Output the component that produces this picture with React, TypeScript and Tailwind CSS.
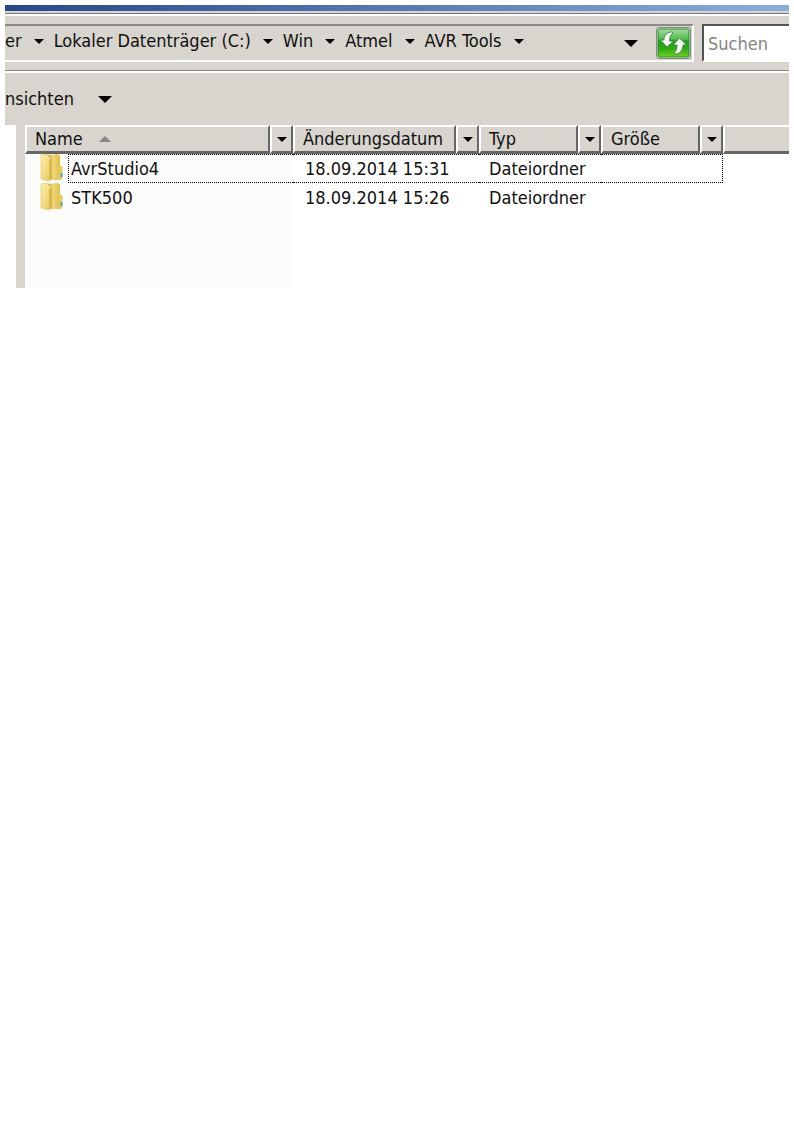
import type { ReactNode } from "react";

const crumbs = ["er", "Lokaler Datenträger (C:)", "Win", "Atmel", "AVR Tools"];

const files = [
  { name: "AvrStudio4", modified: "18.09.2014 15:31", kind: "Dateiordner", focused: true },
  { name: "STK500", modified: "18.09.2014 15:26", kind: "Dateiordner", focused: false },
];

export default function App() {
  return (
    <div className="p-[5px] bg-white text-lg leading-6 text-[#101010] font-['DejaVu_Sans_Condensed','DejaVu_Sans',sans-serif]">
      <main className="bg-[#d7d5ce] overflow-hidden">
        <div className="h-1.5 bg-gradient-to-r from-[#28468c] to-[#8aaee2]" />
        <div className="h-[5px] pt-0.5 border-b-2 border-b-white">
          <div className="h-px bg-[#777]" />
        </div>

        <AddressBar />

        <div className="h-[3px] mt-2 border-t border-[#858585] border-b-2 border-b-white" />
        <div className="h-[52px] flex items-center">
          <button type="button" className="flex items-center gap-6 whitespace-nowrap">
            nsichten
            <Arrow className="w-3.5 h-[7px]" />
          </button>
        </div>

        <div className="flex h-[163px]">
          <nav className="w-[11px] shrink-0 bg-white" />
          <div className="w-[9px] shrink-0" />
          <FileList />
        </div>
      </main>
    </div>
  );
}

function AddressBar() {
  return (
    <div className="flex gap-2 mt-2">
      <div className="flex-1 h-[38px] flex items-center border-t-2 border-t-[#8a8a8a] border-b-2 border-b-white border-r-2 border-r-white">
        <ol className="flex items-center flex-1 pb-1 whitespace-nowrap">
          {crumbs.map((c) => (
            <li key={c} className="flex items-center">
              <a href="#" className="mr-3">{c}</a>
              <button type="button" aria-label={`${c} öffnen`} className="mr-2.5">
                <Arrow className="w-2.5 h-[5px]" />
              </button>
            </li>
          ))}
        </ol>
        <button type="button" aria-label="Verlauf" className="mr-[18px]">
          <Arrow className="w-3.5 h-[7px]" />
        </button>
        <button type="button" aria-label="Aktualisieren" className="mr-px">
          <RefreshIcon />
        </button>
      </div>
      <input
        type="search"
        aria-label="Suchen"
        placeholder="Suchen"
        className="w-[87px] h-[38px] pl-1 bg-white border-t-2 border-l-2 border-[#555] border-b-2 border-b-white outline-none placeholder:text-[#858585]"
      />
    </div>
  );
}

function FileList() {
  return (
    <div className="flex-1 bg-[linear-gradient(to_right,#fcfcfc_268px,#fff_268px)]">
      <table className="w-full table-fixed border-collapse">
        <colgroup>
          <col className="w-[268px]" />
          <col className="w-[186px]" />
          <col className="w-[122px]" />
          <col className="w-[122px]" />
          <col />
        </colgroup>
        <thead>
          <tr>
            <HeaderCell label="Name">
              <svg className="w-3 h-1.5 ml-4" viewBox="0 0 12 6">
                <path d="M6 0l6 6H0z" fill="#868686" />
              </svg>
            </HeaderCell>
            <HeaderCell label="Änderungsdatum" />
            <HeaderCell label="Typ" />
            <HeaderCell label="Größe" />
            <td className="p-0">
              <div className="h-[29px] bg-[#d7d5ce] border-t-2 border-l-2 border-white border-b-3 border-b-[#666]" />
            </td>
          </tr>
        </thead>
        <tbody>
          {files.map((f) => {
            const line = f.focused ? "border-black" : "border-transparent";
            return (
              <tr key={f.name} className="whitespace-nowrap">
                <td className="p-0">
                  <div className="flex pl-[15px]">
                    <FolderIcon />
                    <div className={`flex-1 ml-1 pl-0.5 h-[29px] flex items-center border-y border-l border-dotted ${line}`}>
                      {f.name}
                    </div>
                  </div>
                </td>
                <td className="p-0">
                  <div className={`h-[29px] flex items-center pl-3 border-y border-dotted ${line}`}>{f.modified}</div>
                </td>
                <td className="p-0">
                  <div className={`h-[29px] flex items-center pl-2.5 border-y border-dotted ${line}`}>{f.kind}</div>
                </td>
                <td className="p-0">
                  <div className={`h-[29px] border-y border-r border-dotted ${line}`} />
                </td>
                <td className="p-0" />
              </tr>
            );
          })}
        </tbody>
      </table>
    </div>
  );
}

function HeaderCell({ label, children }: { label: string; children?: ReactNode }) {
  const bevel = "h-[29px] flex items-center border-2 border-t-white border-l-white border-r-[#666] border-b-3 border-b-[#666] bg-[#d7d5ce]";
  return (
    <th scope="col" className="p-0 font-normal">
      <div className="flex">
        <button type="button" className={`${bevel} flex-1 pl-2 whitespace-nowrap`}>
          {label}
          {children}
        </button>
        <button type="button" aria-label={`${label} filtern`} className={`${bevel} w-[23px] justify-center`}>
          <Arrow className="w-2.5 h-[5px]" />
        </button>
      </div>
    </th>
  );
}

function Arrow({ className }: { className: string }) {
  return (
    <svg className={className} viewBox="0 0 10 5" preserveAspectRatio="none">
      <path d="M0 0h10L5 5z" fill="#000" />
    </svg>
  );
}

function RefreshIcon() {
  return (
    <svg className="w-[35px] h-8" viewBox="0 0 35 32">
      <defs>
        <linearGradient id="refresh" x1="0" y1="0" x2="0" y2="1">
          <stop offset="0" stopColor="#a4dba0" />
          <stop offset="0.35" stopColor="#55bd52" />
          <stop offset="0.42" stopColor="#1fa322" />
          <stop offset="0.7" stopColor="#2cab12" />
          <stop offset="1" stopColor="#6fd01c" />
        </linearGradient>
      </defs>
      <rect x="0.5" y="0.5" width="34" height="31" rx="2" fill="#dfe9da" stroke="#858a83" />
      <rect x="2" y="2" width="31" height="28" rx="1" fill="url(#refresh)" stroke="#2b8a35" />
      <path
        d="M16 5c-5 0-8 3-8 8H4.500l6.500 7 6.500-6h-4c0-4 1-6 3.500-8z"
        fill="#f4f8f2" stroke="#37793a" strokeWidth="0.8"
      />
      <path
        d="M19 27c5 0 8-4 8-9h3.500l-7-7-6.500 7h4c0 4-1 6-3 8z"
        fill="#f4f8f2" stroke="#37793a" strokeWidth="0.8"
      />
    </svg>
  );
}

function FolderIcon() {
  return (
    <svg className="w-6 h-[29px] shrink-0" viewBox="0 0 24 29">
      <defs>
        <linearGradient id="folderFront" x1="0" y1="0" x2="1" y2="1">
          <stop offset="0" stopColor="#fbf0a8" />
          <stop offset="1" stopColor="#e6c85c" />
        </linearGradient>
        <linearGradient id="folderBack" x1="0" y1="0" x2="1" y2="0">
          <stop offset="0" stopColor="#c49b36" />
          <stop offset="0.4" stopColor="#f0da7c" />
          <stop offset="1" stopColor="#dfbd48" />
        </linearGradient>
      </defs>
      <path d="M8 1l10-1 2 2v22l-2 2H8z" fill="url(#folderBack)" />
      <path d="M1 1l7-1 1 3 3 1v21l-4 2-7-2z" fill="url(#folderFront)" stroke="#dfc364" strokeWidth="0.6" />
      <path d="M9 6l3-2v21l-3 1.500z" fill="#d9b94e" />
      <path d="M19 12h2.500l1 1.500V24L21 26h-2z" fill="#e6c95f" />
      <path d="M20.500 19h2v4h-2z" fill="#4aa9bd" />
    </svg>
  );
}
